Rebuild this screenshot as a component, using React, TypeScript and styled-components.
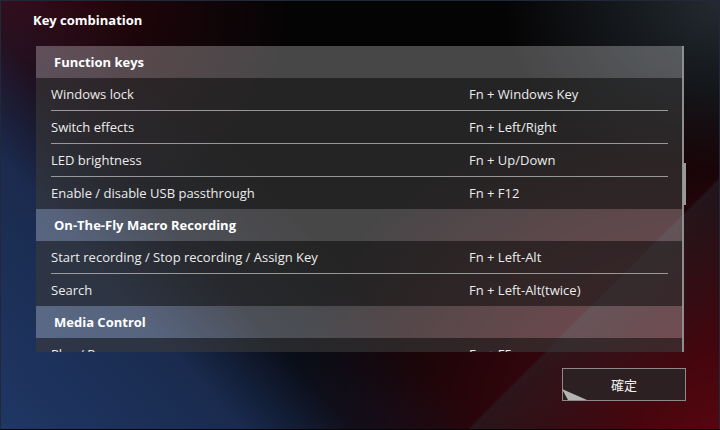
import styled, { createGlobalStyle } from "styled-components";

const GlobalStyle = createGlobalStyle`
  html, body {
    margin: 0;
    padding: 0;
    background: #000;
  }
  * {
    box-sizing: border-box;
  }
`;

type Shortcut = { action: string; keys: string };
type Section = { title: string; items: Shortcut[] };

const sections: Section[] = [
  {
    title: "Function keys",
    items: [
      { action: "Windows lock", keys: "Fn + Windows Key" },
      { action: "Switch effects", keys: "Fn + Left/Right" },
      { action: "LED brightness", keys: "Fn + Up/Down" },
      { action: "Enable / disable USB passthrough", keys: "Fn + F12" },
    ],
  },
  {
    title: "On-The-Fly Macro Recording",
    items: [
      { action: "Start recording / Stop recording / Assign Key", keys: "Fn + Left-Alt" },
      { action: "Search", keys: "Fn + Left-Alt(twice)" },
    ],
  },
  {
    title: "Media Control",
    items: [{ action: "Play / Pause", keys: "Fn + F5" }],
  },
];

export default function App() {
  return (
    <>
      <GlobalStyle />
      <Window>
        <Title>Key combination</Title>
        <Panel>
          <Scroller>
            {sections.map((section) => (
              <div key={section.title}>
                <SectionHeader>{section.title}</SectionHeader>
                {section.items.map((item, i) => (
                  <Row key={item.action}>
                    <RowInner $last={i === section.items.length - 1}>
                      <Cell>{item.action}</Cell>
                      <Cell>{item.keys}</Cell>
                    </RowInner>
                  </Row>
                ))}
              </div>
            ))}
          </Scroller>
          <ScrollTrack>
            <ScrollThumb />
          </ScrollTrack>
        </Panel>
        <Footer>
          <ConfirmButton>
            確定
            <CornerFold viewBox="0 0 30 12" width="30" height="12">
              <polygon points="0,0 25,11 6,11" fill="#b4b4b4" />
            </CornerFold>
          </ConfirmButton>
        </Footer>
      </Window>
    </>
  );
}

const Window = styled.div`
  position: relative;
  width: 720px;
  height: 430px;
  overflow: hidden;
  display: flex;
  flex-direction: column;
  padding: 9px 0 0 32px;
  border: 1px solid #20283a;
  border-bottom-color: #050505;
  font-family: "Open Sans", "Noto Sans CJK JP", sans-serif;
  color: #ececec;
  background:
    linear-gradient(135deg, transparent 78%, rgba(40, 46, 52, 0.4) 78.3%, transparent 92%),
    linear-gradient(48deg, rgba(33, 58, 106, 0.95) 0%, rgba(30, 52, 96, 0.8) 22%, rgba(20, 34, 64, 0.35) 32%, transparent 44%),
    radial-gradient(ellipse 60% 80% at 100% 100%, #55060f 0%, rgba(70, 6, 14, 0.7) 45%, transparent 100%),
    radial-gradient(ellipse 40% 55% at 0% 0%, #3c0812 0%, rgba(50, 6, 14, 0.5) 50%, transparent 100%),
    radial-gradient(ellipse 30% 40% at 100% 0%, #232a30 0%, transparent 100%),
    #050405;
`;

const Title = styled.div`
  font-size: 13px;
  font-weight: 700;
  color: #ffffff;
  line-height: 20px;
  height: 20px;
`;

const Panel = styled.div`
  display: flex;
  margin: 16px 0 0 3px;
  width: 650px;
  height: 306px;
`;

const Scroller = styled.div`
  flex: 1;
  overflow: hidden;
`;

const SectionHeader = styled.div`
  height: 32px;
  line-height: 32px;
  padding-left: 18px;
  font-size: 13px;
  font-weight: 700;
  color: #ffffff;
  background: rgba(255, 255, 255, 0.27);
`;

const Row = styled.div`
  background: rgba(58, 58, 58, 0.6);
  padding: 0 14px 0 15px;
`;

const RowInner = styled.div<{ $last: boolean }>`
  display: grid;
  grid-template-columns: 418px 1fr;
  height: ${(p) => (p.$last ? "32px" : "33px")};
  align-items: center;
  border-bottom: ${(p) => (p.$last ? "none" : "1px solid rgba(190, 190, 190, 0.75)")};
`;

const Cell = styled.div`
  font-size: 13px;
  color: #ececec;
  white-space: nowrap;
`;

const ScrollTrack = styled.div`
  position: relative;
  width: 4px;
  background: linear-gradient(to right, #8e8e8e 0 2px, transparent 2px);
`;

const ScrollThumb = styled.div`
  position: absolute;
  top: 117px;
  left: 1px;
  width: 3px;
  height: 42px;
  background: #9a9a9a;
`;

const Footer = styled.div`
  display: flex;
  justify-content: flex-end;
  padding: 16px 33px 0 0;
`;

const ConfirmButton = styled.button`
  position: relative;
  width: 124px;
  height: 33px;
  background: rgba(44, 34, 36, 0.95);
  border: 1px solid #8e8888;
  color: #f0f0f0;
  font-family: "Noto Sans CJK JP", "Open Sans", sans-serif;
  font-size: 13px;
  padding: 0;
  cursor: pointer;
`;

const CornerFold = styled.svg`
  position: absolute;
  left: -1px;
  bottom: -1px;
`;
